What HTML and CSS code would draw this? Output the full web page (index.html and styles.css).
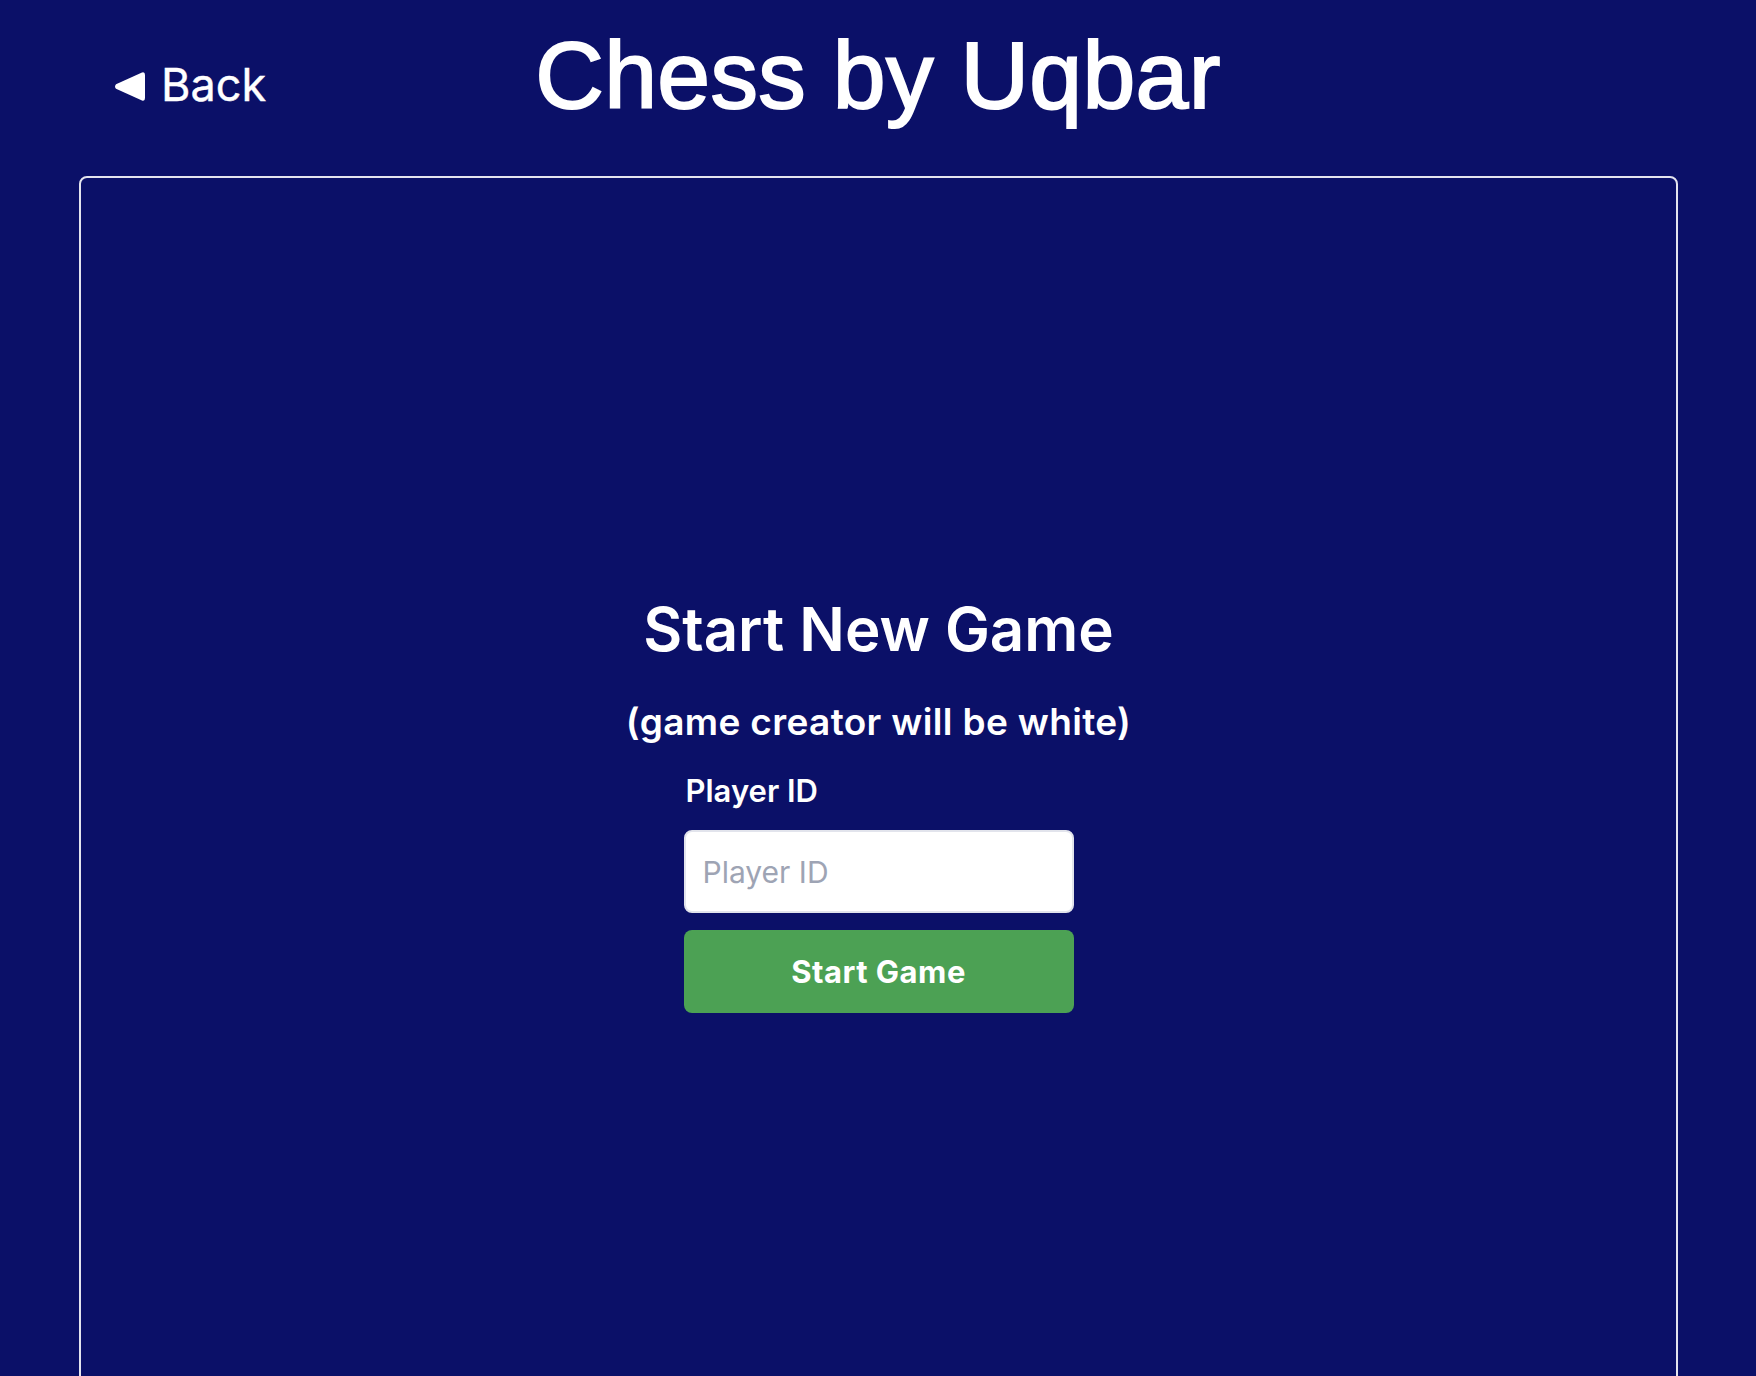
FILE: index.html
```html
<!DOCTYPE html>
<html lang="en">
<head>
<meta charset="utf-8">
<title>Chess by Uqbar</title>
<link rel="stylesheet" href="styles.css">
</head>
<body>
  <header class="header">
    <a class="back" href="#">
      <svg class="back-icon" viewBox="0 0 31 31" width="31" height="31" aria-hidden="true">
        <path d="M28 1.5 Q31 0.5 31 4 L31 27 Q31 30.5 28 29.5 L2 17.8 Q0 15.5 2 13.2 Z" fill="#ffffff"/>
      </svg>
      <span>Back</span>
    </a>
    <h1 class="title">Chess by Uqbar</h1>
    <div class="spacer"></div>
  </header>
  <main class="card">
    <section class="form">
      <h2 class="heading">Start New Game</h2>
      <p class="sub">(game creator will be white)</p>
      <label class="label" for="pid">Player ID</label>
      <input class="input" id="pid" type="text" placeholder="Player ID">
      <button class="btn" type="button">Start Game</button>
    </section>
  </main>
</body>
</html>
```

FILE: styles.css
```css
html, body {
  margin: 0;
  padding: 0;
}
body {
  background: #0b1068;
  color: #ffffff;
  font-family: Inter, "Noto Sans", sans-serif;
  height: 1376px;
  overflow: hidden;
}
.header {
  display: grid;
  grid-template-columns: 1fr auto 1fr;
  padding-top: 22px;
  height: 154px;
  box-sizing: border-box;
}
.back {
  justify-self: start;
  align-self: start;
  margin-top: 36px;
  margin-left: 114px;
  display: flex;
  align-items: center;
  gap: 16px;
  color: #ffffff;
  text-decoration: none;
  font-size: 45px;
  line-height: 54px;
  font-weight: 400;
  -webkit-text-stroke: 0.4px #ffffff;
}
.back-icon {
  display: block;
  margin-top: 2px;
}
.title {
  margin: 0;
  font-family: "Liberation Sans", Arial, sans-serif;
  font-weight: 400;
  font-size: 95px;
  line-height: 106px;
  letter-spacing: 0.3px;
  -webkit-text-stroke: 2px #ffffff;
}
.card {
  margin: 22px 78px 0 79px;
  height: 1300px;
  border: 2px solid #e4e4ee;
  border-radius: 8px;
  box-sizing: border-box;
  padding-top: 415px;
}
.form {
  display: flex;
  flex-direction: column;
  align-items: center;
}
.heading {
  margin: 0;
  font-size: 60px;
  line-height: 72px;
  font-weight: 600;
}
.sub {
  margin: 35px 0 0;
  font-size: 37px;
  line-height: 44px;
  font-weight: 600;
  letter-spacing: 0.35px;
}
.label {
  margin-top: 29px;
  width: 390px;
  padding-left: 2px;
  box-sizing: border-box;
  font-size: 31px;
  line-height: 36px;
  font-weight: 600;
}
.input {
  margin-top: 21px;
  width: 390px;
  height: 83px;
  box-sizing: border-box;
  border: 2px solid #e2e4ec;
  border-radius: 8px;
  background: #ffffff;
  padding: 0 17px;
  font-family: Inter, "Noto Sans", sans-serif;
  font-size: 30px;
  color: #374151;
  outline: none;
}
.input::placeholder {
  color: #9ea4b4;
}
.btn {
  margin-top: 17px;
  width: 390px;
  height: 83px;
  border: none;
  border-radius: 8px;
  background: #4ca154;
  color: #ffffff;
  font-family: Inter, "Noto Sans", sans-serif;
  font-size: 31px;
  font-weight: 700;
  letter-spacing: 0.5px;
  cursor: pointer;
}
```
